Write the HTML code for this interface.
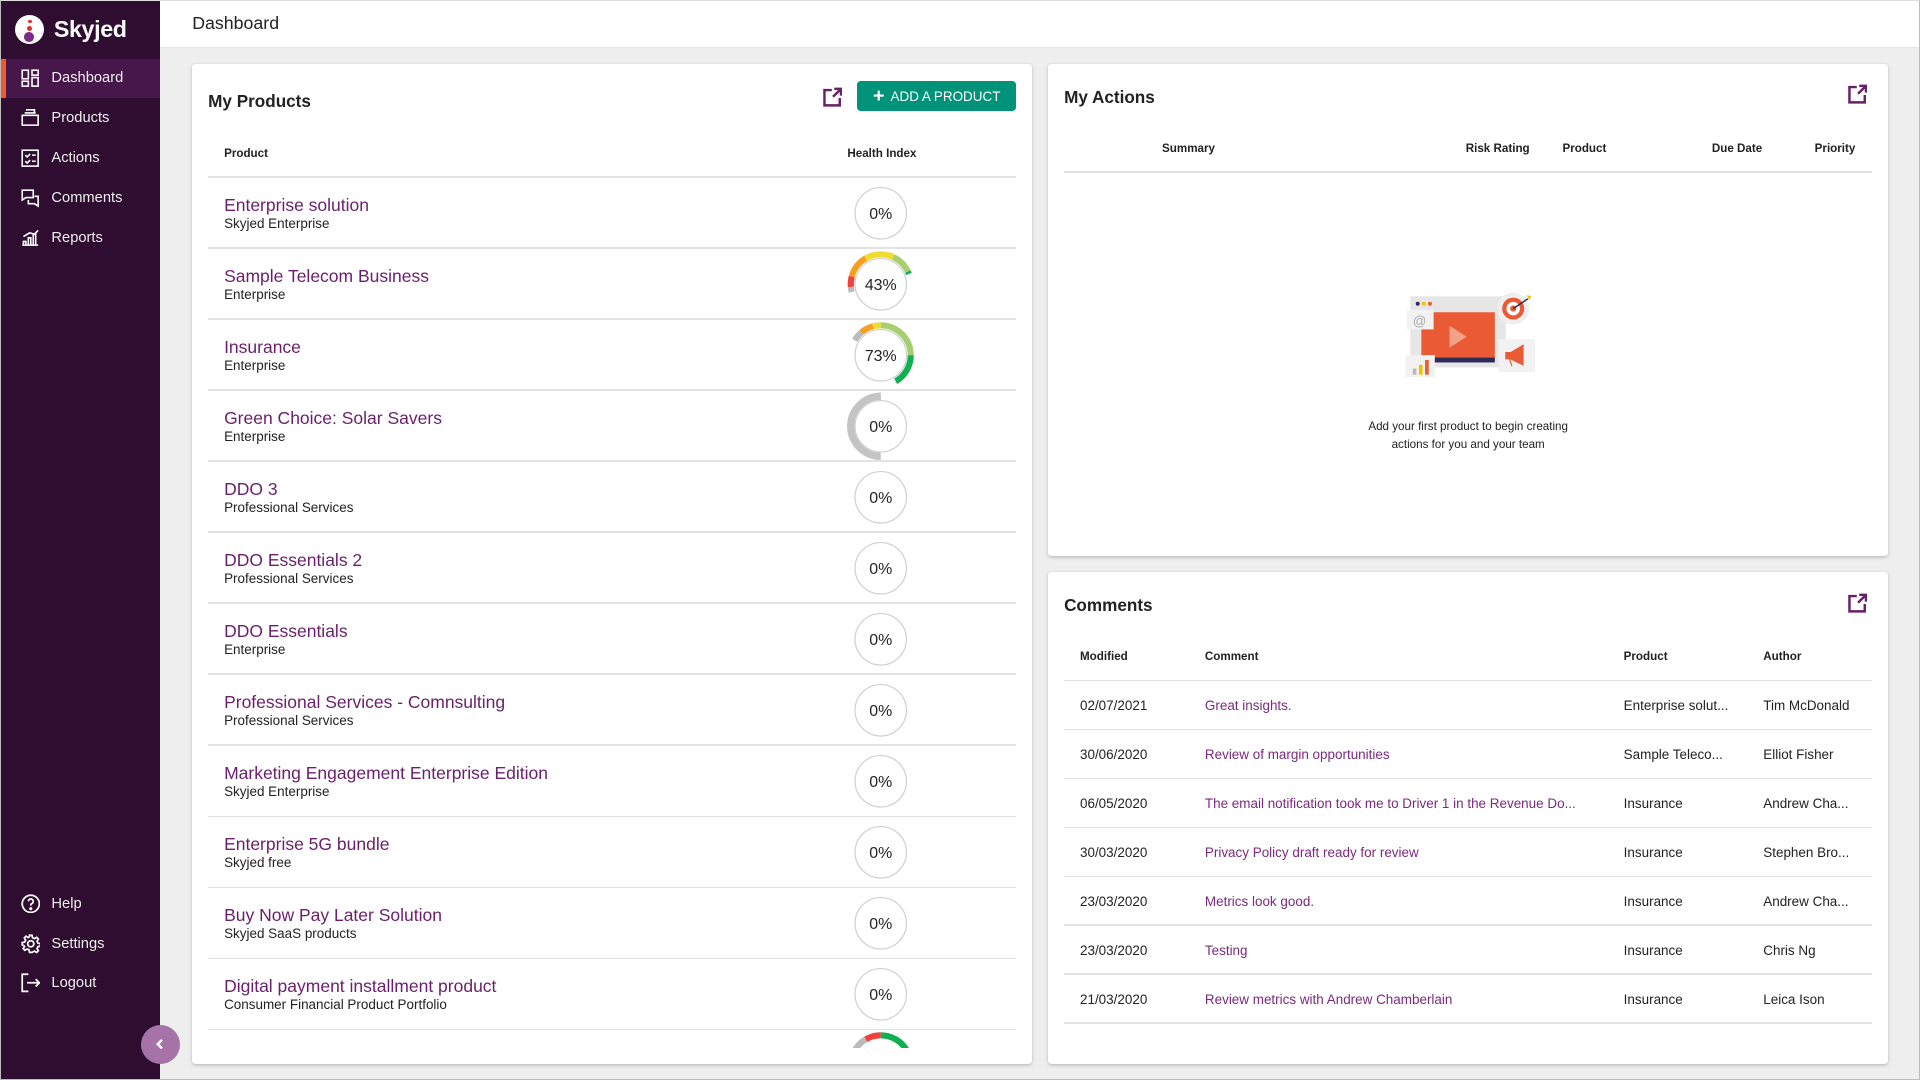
<!DOCTYPE html>
<html><head><meta charset="utf-8">
<style>
html{zoom:1.22449}
*{box-sizing:border-box;margin:0;padding:0}
body{width:1568px;height:882px;overflow:hidden;font-family:"Liberation Sans",Arial,sans-serif;background:#eeeeee;position:relative;color:#222}
.side{position:absolute;left:0;top:0;width:131px;height:882px;background:#2e0d30}
.logo{position:absolute;left:12px;top:12px;display:flex;align-items:center}
.logo .c{width:24px;height:24px;border-radius:50%;background:#fff;position:relative}
.logo .t{color:#fff;font-size:19px;font-weight:bold;margin-left:8px;letter-spacing:-0.3px}
.nav{position:absolute;left:0;width:131px;height:32px;display:flex;align-items:center;color:#eee;font-size:12px}
.nav svg{position:absolute;left:17px}
.nav span{position:absolute;left:42px}
.nav.act{background:#47164a}
.nav.act:before{content:"";position:absolute;left:0;top:0;width:5px;height:32px;background:#f05a28}
.top{position:absolute;left:131px;top:0;right:0;height:39px;background:#fff;border-bottom:1px solid #e6e6e6}
.top span{position:absolute;left:26px;top:11px;font-size:14.5px;color:#222}
.card{position:absolute;background:#fff;border-radius:3px;box-shadow:0 1px 3px rgba(0,0,0,.22)}
.h{position:absolute;font-size:14px;font-weight:bold;color:#222}
.th{position:absolute;font-size:9.5px;font-weight:bold;color:#222}
.line{position:absolute;height:1px;background:#e2e2e2}
.pn{position:absolute;left:26px;font-size:14.3px;color:#6a1f6c}
.ps{position:absolute;left:26px;font-size:11px;color:#222}
.g{position:absolute;left:535px}
.td{position:absolute;font-size:11px;color:#222;white-space:nowrap}
.td.p{color:#7b2a7e}
.btn{position:absolute;left:543px;top:14px;width:130px;height:25px;background:#00937a;border-radius:3px;color:#fff;font-size:11px;display:flex;align-items:center;justify-content:center}
.ext{position:absolute}
.frame{position:absolute;left:0;top:0;width:1568px;height:882px;border:1px solid #bdbdbd;border-top-color:#ddd;pointer-events:none}
</style></head><body>
<div class="side">
 <div class="logo"><div class="c">
  <div style="position:absolute;left:11px;top:4px;width:3px;height:3px;border-radius:50%;background:#e0322c"></div>
  <div style="position:absolute;left:10px;top:9px;width:4px;height:4px;border-radius:50%;background:#e0322c"></div>
  <div style="position:absolute;left:8px;top:14px;width:8px;height:8px;border-radius:50%;background:#7b2b8a"></div>
 </div><span class="t">Skyjed</span></div>
 <div class="nav act" style="top:48px"><svg width="15" height="15" viewBox="0 0 15 15" fill="none" stroke="#fff" stroke-width="1.3"><rect x="1" y="1" width="5" height="7"/><rect x="1" y="10" width="5" height="4"/><rect x="9" y="1" width="5" height="4"/><rect x="9" y="7" width="5" height="7"/></svg><span>Dashboard</span></div>
 <div class="nav" style="top:80px"><svg width="15" height="15" viewBox="0 0 15 15" fill="none" stroke="#fff" stroke-width="1.3"><path d="M1 6h13v8H1z M3 4h9 M4 1.5h7v2"/></svg><span>Products</span></div>
 <div class="nav" style="top:113px"><svg width="15" height="15" viewBox="0 0 15 15" fill="none" stroke="#fff" stroke-width="1.3"><rect x="1" y="1" width="13" height="13"/><path d="M3.5 5l1.5 1.5 2.5-2.5 M9 5h3 M3.5 10l1.5 1.5 2.5-2.5 M9 10h3"/></svg><span>Actions</span></div>
 <div class="nav" style="top:146px"><svg width="15" height="15" viewBox="0 0 15 15" fill="none" stroke="#fff" stroke-width="1.3"><path d="M1 1h9v6H4l-3 2z M6 9v3h5l3 2V6h-3"/></svg><span>Comments</span></div>
 <div class="nav" style="top:178px"><svg width="15" height="15" viewBox="0 0 15 15" fill="none" stroke="#fff" stroke-width="1.3"><path d="M1 14h13 M2 14v-3h2v3 M6 14V8h2v6 M10 14V5h2v9 M2 7l5-3 4 1 3-3"/></svg><span>Reports</span></div>
 <div class="nav" style="top:722px"><svg width="16" height="16" viewBox="0 0 16 16" fill="none" stroke="#fff" stroke-width="1.4"><circle cx="8" cy="8" r="7"/><path d="M6 6a2 2 0 1 1 2.5 2c-.5.2-.5.6-.5 1.5"/><circle cx="8" cy="12" r=".6" fill="#fff"/></svg><span>Help</span></div>
 <div class="nav" style="top:755px"><svg width="16" height="16" viewBox="0 0 16 16" fill="none" stroke="#fff" stroke-width="1.4"><circle cx="8" cy="8" r="2.5"/><path d="M7 1h2l.4 2 1.6.8 1.8-1.1 1.4 1.4-1.1 1.8.8 1.6 2 .4v2l-2 .4-.8 1.6 1.1 1.8-1.4 1.4-1.8-1.1-1.6.8L9 15H7l-.4-2-1.6-.8-1.8 1.1-1.4-1.4 1.1-1.8L2.1 9.4 1 9V7l2-.4.8-1.6-1.1-1.8 1.4-1.4 1.8 1.1L7 2z"/></svg><span>Settings</span></div>
 <div class="nav" style="top:787px"><svg width="16" height="16" viewBox="0 0 16 16" fill="none" stroke="#fff" stroke-width="1.4"><path d="M6 1H1v14h5 M5 8h10 M12 5l3 3-3 3"/></svg><span>Logout</span></div>
</div>
<div style="position:absolute;left:115px;top:837px;width:32px;height:32px;border-radius:50%;background:#a673a8;color:#fff;display:flex;align-items:center;justify-content:center"><svg width="10" height="10" viewBox="0 0 10 10" fill="none" stroke="#fff" stroke-width="2"><path d="M6.5 1.5L3 5l3.5 3.5"/></svg></div>
<div class="top"><span>Dashboard</span></div>

<div class="card" style="left:157px;top:52px;width:686px;height:817px;overflow:hidden">
 <div class="h" style="left:13px;top:22px">My Products</div>
 <svg class="ext" style="left:514px;top:19px" width="17" height="17" viewBox="0 0 17 17" fill="none" stroke="#6a1f6c" stroke-width="2"><path d="M8 2.5H2v12.5h12.5V9 M9 8l6.5-6.5 M10 1.5h5.5V7"/></svg>
 <div class="btn"><b style="font-size:16px;margin-right:5px;font-weight:bold">+</b>ADD A PRODUCT</div>
 <div class="th" style="left:26px;top:68px">Product</div>
 <div class="th" style="left:535px;top:68px">Health Index</div>
 <div class="line" style="left:13px;width:660px;top:92px"></div>
 <div style="position:absolute;left:0;top:0;width:686px;height:804px;overflow:hidden">
 <div id="rows"></div>
 </div>
</div>

<div class="card" style="left:856px;top:52px;width:686px;height:402px">
 <div class="h" style="left:13px;top:19px">My Actions</div>
 <svg class="ext" style="left:652px;top:17px" width="17" height="17" viewBox="0 0 17 17" fill="none" stroke="#6a1f6c" stroke-width="2"><path d="M8 2.5H2v12.5h12.5V9 M9 8l6.5-6.5 M10 1.5h5.5V7"/></svg>
 <div class="th" style="left:93px;top:64px">Summary</div>
 <div class="th" style="left:341px;top:64px">Risk Rating</div>
 <div class="th" style="left:420px;top:64px">Product</div>
 <div class="th" style="left:542px;top:64px">Due Date</div>
 <div class="th" style="left:626px;top:64px">Priority</div>
 <div class="line" style="left:13px;width:660px;top:88px"></div>
 <svg style="position:absolute;left:290px;top:184px" width="110" height="72" viewBox="0 0 110 72">
  <rect x="6" y="6" width="78" height="58" fill="#e6e6e6"/>
  <circle cx="12" cy="12" r="1.6" fill="#2c2c5a"/><circle cx="17" cy="12" r="1.6" fill="#f2c200"/><circle cx="22" cy="12" r="1.6" fill="#ea5a35"/>
  <rect x="15" y="19" width="60" height="40" fill="#ea5a35"/>
  <rect x="15" y="56" width="60" height="4" fill="#2c2c5a"/>
  <path d="M38 30v18l14-9z" fill="#f4a18a"/>
  <rect x="3" y="17" width="22" height="16" fill="#f2f2f2"/>
  <text x="8" y="30" font-size="11" fill="#aaa" font-family="Liberation Sans">@</text>
  <rect x="2" y="54" width="24" height="22" fill="#f2f2f2"/>
  <rect x="8" y="65" width="3" height="5" fill="#bbb"/><rect x="13" y="62" width="3" height="8" fill="#f2c200"/><rect x="18" y="58" width="3" height="12" fill="#ea5a35"/>
  <circle cx="90" cy="16" r="13" fill="#eee"/><circle cx="90" cy="16" r="9" fill="#ea5a35"/><circle cx="90" cy="16" r="5.5" fill="#fff"/><circle cx="90" cy="16" r="2.5" fill="#ea5a35"/>
  <path d="M90 16l12-8" stroke="#2c2c5a" stroke-width="1.2"/><path d="M101 5l4 1-2 3z" fill="#f2c200"/>
  <rect x="78" y="41" width="30" height="27" fill="#f2f2f2"/>
  <path d="M84 52h4l10-6v16l-10-5h-4z M87 57l2 6" fill="#ea5a35" stroke="#ea5a35"/>
 </svg>
 <div style="position:absolute;left:0;width:686px;top:289px;text-align:center;font-size:9.5px;line-height:15px;color:#222">Add your first product to begin creating<br>actions for you and your team</div>
</div>

<div class="card" style="left:856px;top:467px;width:686px;height:402px">
 <div class="h" style="left:13px;top:19px">Comments</div>
 <svg class="ext" style="left:652px;top:17px" width="17" height="17" viewBox="0 0 17 17" fill="none" stroke="#6a1f6c" stroke-width="2"><path d="M8 2.5H2v12.5h12.5V9 M9 8l6.5-6.5 M10 1.5h5.5V7"/></svg>
 <div class="th" style="left:26px;top:64px">Modified</div>
 <div class="th" style="left:128px;top:64px">Comment</div>
 <div class="th" style="left:470px;top:64px">Product</div>
 <div class="th" style="left:584px;top:64px">Author</div>
 <div class="line" style="left:13px;width:660px;top:88px"></div>
 <div id="crows"></div>
</div>
<div class="frame"></div>

<script>
var P=[["Enterprise solution","Skyjed Enterprise",0],["Sample Telecom Business","Enterprise",43],["Insurance","Enterprise",73],["Green Choice: Solar Savers","Enterprise","g"],["DDO 3","Professional Services",0],["DDO Essentials 2","Professional Services",0],["DDO Essentials","Enterprise",0],["Professional Services - Comnsulting","Professional Services",0],["Marketing Engagement Enterprise Edition","Skyjed Enterprise",0],["Enterprise 5G bundle","Skyjed free",0],["Buy Now Pay Later Solution","Skyjed SaaS products",0],["Digital payment installment product","Consumer Financial Product Portfolio",0],["","","x"]];
function seg(a0,a1,col,r,w){r=r||24.5;w=w||5;var c=2*Math.PI*r;var l=(a1-a0)/360*c;return '<circle r="'+r+'" fill="none" stroke="'+col+'" stroke-width="'+w+'" stroke-dasharray="'+l+' '+c+'" transform="rotate('+(a0-90)+')"/>';}
var h='';
P.forEach(function(p,i){var y=93+i*58;
 if(p[0]){h+='<div class="pn" style="top:'+(y+14)+'px">'+p[0]+'</div><div class="ps" style="top:'+(y+31)+'px">'+p[1]+'</div>';
 h+='<div class="line" style="left:13px;width:660px;top:'+(y+57)+'px"></div>';}
 var s='<svg class="g" style="left:532px;top:'+(y+1)+'px" width="60" height="56" viewBox="-30 -28 60 56">';
 if(p[2]==43)s+=seg(255,265,'#bbb')+seg(265,285,'#f04040')+seg(285,330,'#f5a020')+seg(330,385,'#f0dc30')+seg(25,65,'#a6d070')+seg(65,70,'#10b050');
 if(p[2]==73)s+=seg(300,320,'#bbb')+seg(320,345,'#f5a020')+seg(345,360,'#f0dc30')+seg(0,90,'#a6d070')+seg(90,150,'#10b050');
 if(p[2]=='g')s+=seg(180,360,'#c4c4c4',24.5,6);
 if(p[2]=='x')s+=seg(300,330,'#bbb')+seg(330,360,'#f04040')+seg(0,60,'#10b050');
 if(p[2]!=='x')s+='<circle r="21" fill="#fff" stroke="#d0d0d0" stroke-width="1"/><text x="0" y="4.5" text-anchor="middle" font-size="13" font-family="Liberation Sans" fill="#222">'+(p[2]=='g'?0:p[2])+'%</text>';
 s+='</svg>';h+=s;});
document.getElementById('rows').innerHTML=h;
var R=[["02/07/2021","Great insights.","Enterprise solut...","Tim McDonald"],["30/06/2020","Review of margin opportunities","Sample Teleco...","Elliot Fisher"],["06/05/2020","The email notification took me to Driver 1 in the Revenue Do...","Insurance","Andrew Cha..."],["30/03/2020","Privacy Policy draft ready for review","Insurance","Stephen Bro..."],["23/03/2020","Metrics look good.","Insurance","Andrew Cha..."],["23/03/2020","Testing","Insurance","Chris Ng"],["21/03/2020","Review metrics with Andrew Chamberlain","Insurance","Leica Ison"]];
var k='';R.forEach(function(r,i){var y=89+i*40;
 k+='<div class="td" style="left:26px;top:'+(y+14)+'px">'+r[0]+'</div><div class="td p" style="left:128px;top:'+(y+14)+'px">'+r[1]+'</div><div class="td" style="left:470px;top:'+(y+14)+'px">'+r[2]+'</div><div class="td" style="left:584px;top:'+(y+14)+'px">'+r[3]+'</div><div class="line" style="left:13px;width:660px;top:'+(y+39)+'px"></div>';});
document.getElementById('crows').innerHTML=k;
</script>
</body></html>
